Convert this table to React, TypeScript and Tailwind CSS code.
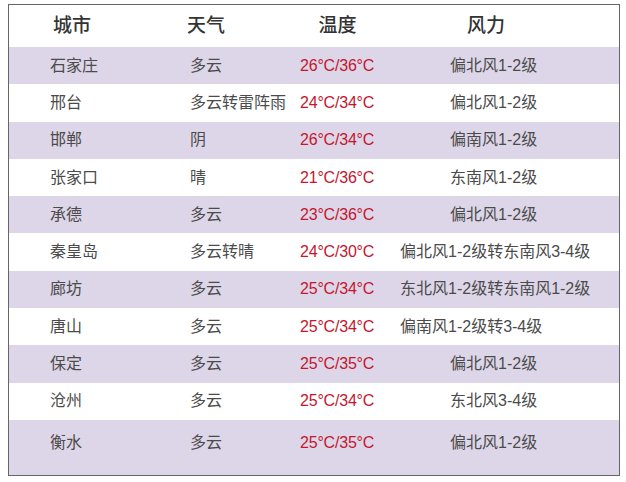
const rows = [
  { city: "石家庄", weather: "多云", temp: "26°C/36°C", wind: "偏北风1-2级" },
  { city: "邢台", weather: "多云转雷阵雨", temp: "24°C/34°C", wind: "偏北风1-2级" },
  { city: "邯郸", weather: "阴", temp: "26°C/34°C", wind: "偏南风1-2级" },
  { city: "张家口", weather: "晴", temp: "21°C/36°C", wind: "东南风1-2级" },
  { city: "承德", weather: "多云", temp: "23°C/36°C", wind: "偏北风1-2级" },
  { city: "秦皇岛", weather: "多云转晴", temp: "24°C/30°C", wind: "偏北风1-2级转东南风3-4级", long: true },
  { city: "廊坊", weather: "多云", temp: "25°C/34°C", wind: "东北风1-2级转东南风1-2级", long: true },
  { city: "唐山", weather: "多云", temp: "25°C/34°C", wind: "偏南风1-2级转3-4级", long: true },
  { city: "保定", weather: "多云", temp: "25°C/35°C", wind: "偏北风1-2级" },
  { city: "沧州", weather: "多云", temp: "25°C/34°C", wind: "东北风3-4级" },
  { city: "衡水", weather: "多云", temp: "25°C/35°C", wind: "偏北风1-2级" },
];

export default function App() {
  return (
    <div
      className="w-[626px] h-[482px] bg-white pt-[4px] pl-[8px]"
      style={{ fontFamily: '"Liberation Sans", "Noto Sans CJK SC", sans-serif' }}
    >
      <div className="w-[612px] h-[472px] border-[1.5px] border-[#666] flex flex-col bg-white">
        {/* 表头 */}
        <div className="flex items-center h-[42px] shrink-0 text-[19px] font-medium text-[#333]">
          <div className="w-[171px] pl-[44px]">城市</div>
          <div className="w-[110px] pl-[7px]">天气</div>
          <div className="w-[95px] text-center">温度</div>
          <div className="pl-[82px]">风力</div>
        </div>

        {rows.map((r, i) => {
          const last = i === rows.length - 1;
          return (
            <div
              key={r.city}
              className={
                (i % 2 === 0 ? "bg-[#ddd6e8] " : "bg-white ") +
                (last ? "flex-1 items-start pt-[11px] " : "h-[37.3px] shrink-0 items-center ") +
                "flex text-[16px] text-[#4b4b4b]"
              }
            >
              <div className="w-[171px] pl-[41px]">{r.city}</div>
              <div className="w-[110px] pl-[10px] whitespace-nowrap">{r.weather}</div>
              <div className="w-[95px] pl-[10px] text-[#c4162e] whitespace-nowrap tracking-[-0.2px]">{r.temp}</div>
              <div className={(r.long ? "pl-[15px] " : "pl-[65px] ") + "whitespace-nowrap"}>{r.wind}</div>
            </div>
          );
        })}
      </div>
    </div>
  );
}
